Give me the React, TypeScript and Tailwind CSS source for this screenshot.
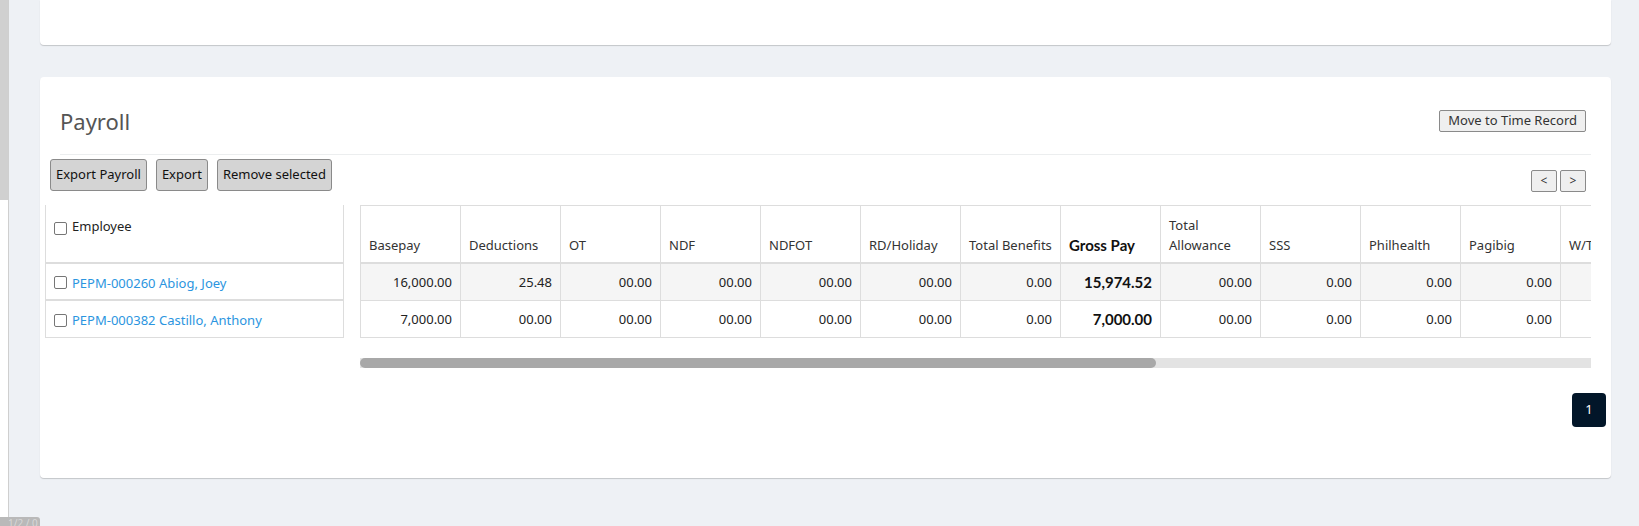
import React from 'react';

interface PayrollRow {
  id: string;
  name: string;
  values: string[];
}

const columns = [
  'Basepay',
  'Deductions',
  'OT',
  'NDF',
  'NDFOT',
  'RD/Holiday',
  'Total Benefits',
  'Gross Pay',
  'Total Allowance',
  'SSS',
  'Philhealth',
  'Pagibig',
  'W/Tax',
  'Net Pay',
];

const rows: PayrollRow[] = [
  {
    id: 'PEPM-000260',
    name: 'Abiog, Joey',
    values: ['16,000.00', '25.48', '00.00', '00.00', '00.00', '00.00', '0.00', '15,974.52', '00.00', '0.00', '0.00', '0.00', '0.00', '15,974.52'],
  },
  {
    id: 'PEPM-000382',
    name: 'Castillo, Anthony',
    values: ['7,000.00', '00.00', '00.00', '00.00', '00.00', '00.00', '0.00', '7,000.00', '00.00', '0.00', '0.00', '0.00', '0.00', '7,000.00'],
  },
];

const GROSS = 7;

const Checkbox: React.FC = () => (
  <span className="inline-block w-[13px] h-[13px] shrink-0 rounded-[2px] border border-[#767676] bg-white"></span>
);

export default function App() {
  return (
    <div className="relative flex h-[526px] w-[1639px] overflow-hidden bg-[#eef1f5] font-['Noto_Sans',sans-serif] text-[13px] text-[#222]">
      {/* left rail */}
      <div className="w-[9px] shrink-0 border-r border-[#cfcfcf] bg-white">
        <div className="h-[200px] w-[8px] bg-[#d0d0d0]"></div>
      </div>

      <div className="min-w-0 flex-1 pl-[31px] pr-[28px]">
        {/* top card, scrolled out */}
        <div className="h-[45px] rounded-b-[4px] bg-white shadow-[0_1px_1px_rgba(0,0,0,0.18)]"></div>

        {/* payroll card */}
        <div className="mt-[32px] h-[401px] rounded-[4px] bg-white shadow-[0_1px_1px_rgba(0,0,0,0.18)]">
          <div className="mx-5 flex h-[78px] items-center justify-between border-b border-[#eceeef] pt-[10px]">
            <h2 className="text-[22px] leading-none text-[#555]">Payroll</h2>
            <button className="mr-[5px] h-[22px] rounded-[2px] border border-[#8a8a8a] bg-[#efefef] px-[8px] text-[13px] leading-none text-[#333]">
              Move to Time Record
            </button>
          </div>

          <div className="mt-[4px] flex items-end justify-between pl-[10px] pr-[25px]">
            <div className="flex gap-[9px]">
              <button className="h-[32px] rounded-[3px] border border-[#8a8a8a] bg-[#d4d4d4] px-[5px] text-[13px] text-[#111]">Export Payroll</button>
              <button className="h-[32px] rounded-[3px] border border-[#8a8a8a] bg-[#d4d4d4] px-[5px] text-[13px] text-[#111]">Export</button>
              <button className="h-[32px] rounded-[3px] border border-[#8a8a8a] bg-[#d4d4d4] px-[5px] text-[13px] text-[#111]">Remove selected</button>
            </div>
            <div className="mb-[-1px] flex gap-[3px]">
              <button className="h-[22px] w-[26px] rounded-[2px] border border-[#8a8a8a] bg-[#efefef] text-[12px] leading-none text-[#333]">&lt;</button>
              <button className="h-[22px] w-[26px] rounded-[2px] border border-[#8a8a8a] bg-[#efefef] text-[12px] leading-none text-[#333]">&gt;</button>
            </div>
          </div>

          <div className="mt-[14px] flex items-start gap-[16px] pl-[5px] pr-[20px]">
            {/* employee column */}
            <div className="w-[299px] shrink-0 border-x border-[#ddd]">
              <div className="flex h-[59px] items-start gap-[5px] border-b-2 border-[#ddd] pl-[8px] pt-[11px] leading-5">
                <span className="mt-[4px]"><Checkbox /></span>
                <span>Employee</span>
              </div>
              {rows.map((r, i) => (
                <div
                  key={r.id}
                  className={`flex items-center gap-[5px] pl-[8px] pt-[2px] leading-5 ${i === 0 ? 'h-[37px] border-b-2' : 'h-[37px] border-b'} border-[#ddd]`}
                >
                  <Checkbox />
                  <a className="text-[#2b95e0]">{r.id} {r.name}</a>
                </div>
              ))}
            </div>

            {/* data columns */}
            <div className="min-w-0 flex-1">
              <div className="overflow-hidden">
                <div className="w-max border-l border-t border-[#ddd]">
                  <div className="flex h-[58px] border-b-2 border-[#ddd]">
                    {columns.map((c, ci) => (
                      <div key={c} className="flex w-[100px] shrink-0 items-end border-r border-[#ddd] px-[8px] pb-[7px] leading-5 text-[#333]">
                        {ci === GROSS ? (
                          <span className="font-['Lato',sans-serif] text-[15px] font-bold text-[#111]">{c}</span>
                        ) : c === 'Total Allowance' ? (
                          <span>Total<br />Allowance</span>
                        ) : (
                          <span className="whitespace-nowrap">{c}</span>
                        )}
                      </div>
                    ))}
                  </div>
                  {rows.map((r, i) => (
                    <div key={r.id} className={`flex h-[37px] border-b border-[#ddd] ${i === 0 ? 'bg-[#f5f5f5]' : 'bg-white'}`}>
                      {r.values.map((v, ci) => (
                        <div key={ci} className="flex w-[100px] shrink-0 items-center justify-end border-r border-[#ddd] px-[8px] leading-5">
                          {ci === GROSS ? (
                            <span className="font-['Lato',sans-serif] text-[15px] font-bold text-[#111]">{v}</span>
                          ) : ci >= 12 ? (
                            <span></span>
                          ) : (
                            <span>{v}</span>
                          )}
                        </div>
                      ))}
                    </div>
                  ))}
                </div>
              </div>
              {/* horizontal scrollbar */}
              <div className="mt-[20px] h-[10px] bg-[#e3e3e3]">
                <div className="h-[10px] w-[796px] rounded-full bg-[#a8a8a8]"></div>
              </div>
            </div>
          </div>

          <div className="mt-[25px] flex justify-end pr-[5px]">
            <button className="flex h-[34px] w-[34px] items-center justify-center rounded-[4px] bg-[#021629] text-[13px] text-white">1</button>
          </div>
        </div>
      </div>

      {/* bottom-left status tag */}
      <div className="absolute bottom-[-4px] left-0 h-[13px] w-[40px] rounded-tr-[3px] bg-[#b9b9b9] pl-[8px] text-[10px] leading-[12px] text-[#d8d8d8]">1/2 / 0</div>
    </div>
  );
}
